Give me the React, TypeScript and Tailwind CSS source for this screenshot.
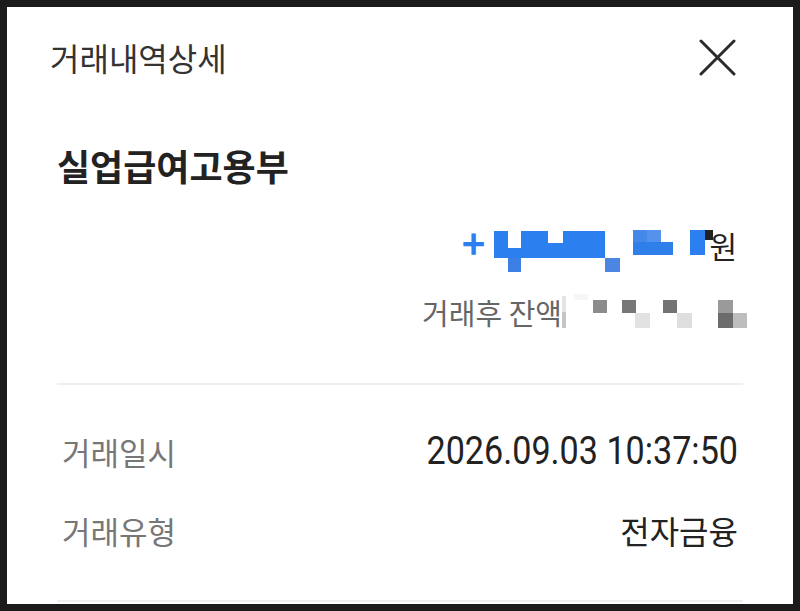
export default function App() {
  const font = { fontFamily: '"Noto Sans CJK KR", "Noto Sans", sans-serif' };

  return (
    <div className="w-[800px] h-[611px] bg-[#1b1b1b] p-[7px]" style={font}>
      <div className="bg-white h-full overflow-hidden flex flex-col">
        {/* header */}
        <div className="h-[100px] flex items-center justify-between pl-[43px] pr-[57px] shrink-0">
          <span className="text-[32px] text-[#333] leading-none">거래내역상세</span>
          <svg width="37" height="37" viewBox="0 0 37 37">
            <path d="M2 2 L35 35 M35 2 L2 35" stroke="#2b2b2b" strokeWidth="3" strokeLinecap="round" />
          </svg>
        </div>

        <div className="mt-[38px] h-[40px] flex items-center pl-[50px] shrink-0">
          <span className="text-[36px] font-bold text-[#222] leading-none">실업급여고용부</span>
        </div>

        {/* amount */}
        <div className="mt-[40px] h-[40px] flex items-center justify-end pr-[56px] shrink-0">
          <span className="text-[40px] font-bold text-[#2b7fef] leading-none mr-[8px] -mt-[6px]">+</span>
          <svg width="220" height="46" viewBox="0 0 220 46" className="mt-[12px]">
            <rect x="1" y="3" width="14" height="27" fill="#2b7fef" />
            <rect x="15" y="20" width="13" height="10" fill="#2b7fef" />
            <rect x="15" y="30" width="13" height="14" fill="#3d7fe4" />
            <rect x="28" y="3" width="27" height="27" fill="#2b7fef" />
            <rect x="55" y="15" width="15" height="15" fill="#2b7fef" />
            <rect x="70" y="3" width="42" height="27" fill="#2b7fef" />
            <rect x="112" y="30" width="15" height="14" fill="#4a86e2" />
            <rect x="140" y="2" width="14" height="12" fill="#4289ea" />
            <rect x="154" y="2" width="14" height="12" fill="#5592ec" />
            <rect x="140" y="14" width="40" height="13" fill="#2f7fea" />
            <rect x="197" y="2" width="15" height="25" fill="#2b7fef" />
            <rect x="212" y="2" width="8" height="10" fill="#222" />
          </svg>
          <span className="text-[30px] text-[#222] leading-none -ml-[4px]">원</span>
        </div>

        {/* balance */}
        <div className="mt-[29px] h-[36px] flex items-center justify-end pr-[45px] shrink-0">
          <span className="text-[29px] text-[#666] leading-none">거래후 잔액</span>
          <svg width="186" height="36" viewBox="0 0 186 36">
            <rect x="0" y="2" width="4" height="16" fill="#e4e4e4" />
            <rect x="0" y="18" width="4" height="16" fill="#c4c4c4" />
            <rect x="12" y="0" width="14" height="6" fill="#f6f6f6" />
            <rect x="31" y="6" width="14" height="13" fill="#8c8c8c" />
            <rect x="60" y="6" width="14" height="13" fill="#777" />
            <rect x="73" y="19" width="15" height="15" fill="#e2e2e2" />
            <rect x="101" y="6" width="14" height="13" fill="#737373" />
            <rect x="115" y="19" width="15" height="15" fill="#dedede" />
            <rect x="156" y="6" width="15" height="13" fill="#9a9a9a" />
            <rect x="156" y="19" width="15" height="15" fill="#6c6c6c" />
            <rect x="171" y="19" width="14" height="15" fill="#bdbdbd" />
          </svg>
        </div>

        <div className="mt-[53px] mx-[50px] h-[2px] bg-[#eeeeee] shrink-0" />

        {/* rows */}
        <div className="mt-[46px] h-[40px] flex items-center justify-between pl-[55px] pr-[55px] shrink-0">
          <span className="text-[31px] text-[#777] leading-none">거래일시</span>
          <span
            className="text-[39px] text-[#222] leading-none scale-x-[0.875] origin-right whitespace-nowrap"
            style={{ fontFamily: 'Roboto, "Noto Sans", sans-serif' }}
          >
            2026.09.03 10:37:50
          </span>
        </div>

        <div className="mt-[39px] h-[40px] flex items-center justify-between pl-[55px] pr-[55px] shrink-0">
          <span className="text-[31px] text-[#777] leading-none">거래유형</span>
          <span className="text-[32px] text-[#222] leading-none">전자금융</span>
        </div>

        <div className="mt-[50px] mx-[50px] h-[2px] bg-[#eeeeee] shrink-0" />
      </div>
    </div>
  );
}
